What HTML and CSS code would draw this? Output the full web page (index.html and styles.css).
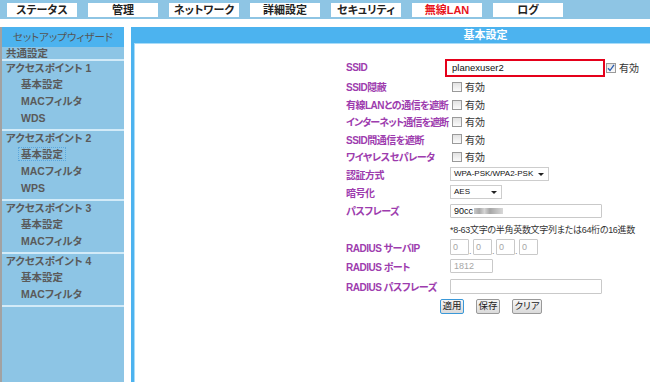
FILE: index.html
```html
<!DOCTYPE html>
<html lang="ja">
<head>
    <meta charset="UTF-8">
    <title>無線LAN 基本設定</title>
    <link rel="stylesheet" href="styles.css">
</head>
<body>
    <!-- Onglets du haut -->
    <div class="topbar">
        <div class="tab">ステータス</div>
        <div class="tab">管理</div>
        <div class="tab">ネットワーク</div>
        <div class="tab">詳細設定</div>
        <div class="tab">セキュリティ</div>
        <div class="tab tab-active">無線LAN</div>
        <div class="tab">ログ</div>
    </div>

    <div class="layout">
        <!-- Menu latéral -->
        <div class="sidebar">
            <div class="side-head">セットアップウィザード</div>
            <div class="side-top">共通設定</div>
            <div class="group">
                <div class="group-title">アクセスポイント 1</div>
                <div class="item">基本設定</div>
                <div class="item">MACフィルタ</div>
                <div class="item">WDS</div>
            </div>
            <div class="group">
                <div class="group-title">アクセスポイント 2</div>
                <div class="item"><span class="focused">基本設定</span></div>
                <div class="item">MACフィルタ</div>
                <div class="item">WPS</div>
            </div>
            <div class="group">
                <div class="group-title">アクセスポイント 3</div>
                <div class="item">基本設定</div>
                <div class="item">MACフィルタ</div>
            </div>
            <div class="group">
                <div class="group-title">アクセスポイント 4</div>
                <div class="item">基本設定</div>
                <div class="item">MACフィルタ</div>
            </div>
        </div>

        <!-- Panneau principal -->
        <div class="main">
            <div class="main-head">基本設定</div>
            <div class="main-body">
                <div class="form">
                    <div class="row h19">
                        <span class="label">SSID</span>
                        <div class="field">
                            <div class="ssid-box">planexuser2</div>
                            <span class="check checked">
                                <svg width="8" height="8" viewBox="0 0 8 8"><path d="M1 4.2 L3 6.5 L7 0.8" fill="none" stroke="#2a5db0" stroke-width="1.3"/></svg>
                            </span>
                            <span class="check-text">有効</span>
                        </div>
                    </div>
                    <div class="row h19">
                        <span class="label">SSID隠蔽</span>
                        <div class="field"><span class="check"></span><span class="check-text">有効</span></div>
                    </div>
                    <div class="row">
                        <span class="label">有線LANとの通信を遮断</span>
                        <div class="field"><span class="check"></span><span class="check-text">有効</span></div>
                    </div>
                    <div class="row">
                        <span class="label tight">インターネット通信を遮断</span>
                        <div class="field"><span class="check"></span><span class="check-text">有効</span></div>
                    </div>
                    <div class="row h18">
                        <span class="label">SSID間通信を遮断</span>
                        <div class="field"><span class="check"></span><span class="check-text">有効</span></div>
                    </div>
                    <div class="row">
                        <span class="label">ワイヤレスセパレータ</span>
                        <div class="field"><span class="check"></span><span class="check-text">有効</span></div>
                    </div>
                    <div class="row h18">
                        <span class="label">認証方式</span>
                        <div class="field">
                            <div class="select select-auth">WPA-PSK/WPA2-PSK<span class="arrow"></span></div>
                        </div>
                    </div>
                    <div class="row h18">
                        <span class="label">暗号化</span>
                        <div class="field">
                            <div class="select select-enc">AES<span class="arrow"></span></div>
                        </div>
                    </div>
                    <div class="row h19">
                        <span class="label">パスフレーズ</span>
                        <div class="field">
                            <div class="input input-long">90cc<span class="blur"></span></div>
                        </div>
                    </div>
                    <div class="row h18">
                        <span class="label"></span>
                        <div class="field note">*8-63文字の半角英数文字列または64桁の16進数</div>
                    </div>
                    <div class="row h18">
                        <span class="label">RADIUS サーバIP</span>
                        <div class="field">
                            <div class="input ip">0</div><span class="dot">.</span>
                            <div class="input ip">0</div><span class="dot">.</span>
                            <div class="input ip">0</div><span class="dot">.</span>
                            <div class="input ip">0</div>
                        </div>
                    </div>
                    <div class="row h20">
                        <span class="label">RADIUS ポート</span>
                        <div class="field">
                            <div class="input port">1812</div>
                        </div>
                    </div>
                    <div class="row h20">
                        <span class="label">RADIUS パスフレーズ</span>
                        <div class="field">
                            <div class="input input-long input-radius"></div>
                        </div>
                    </div>
                    <div class="buttons">
                        <button class="btn btn-focus">適用</button>
                        <button class="btn">保存</button>
                        <button class="btn btn-wide">クリア</button>
                    </div>
                </div>
            </div>
        </div>
    </div>
</body>
</html>
```

FILE: styles.css
```css
/* Page de configuration du routeur - onglet Wi-Fi */
* { box-sizing: border-box; margin: 0; padding: 0; }
body {
    font-family: 'Liberation Sans', 'Noto Sans CJK JP', sans-serif;
    font-feature-settings: "palt" 1;
    background-color: #fff;
    color: #333;
    width: 650px;
    height: 382px;
    overflow: hidden;
}

.topbar { height: 19px; background-color: #8ec5e4; display: flex; gap: 11px; padding: 3px 0 0 7px; }
.tab { width: 70px; height: 14px; background-color: #fff; text-align: center; font-size: 11px; font-weight: bold; line-height: 14px; color: #222; flex-shrink: 0; }
.tab-active { color: #e8141b; }

.layout { display: flex; margin-top: 8px; height: 355px; }

.sidebar { width: 124px; flex-shrink: 0; background-color: #8dc5e5; border-left: 2px solid #a2a2a2; font-size: 10.5px; font-weight: bold; color: #5a5a5a; }
.side-head { height: 20px; line-height: 20px; background-color: #4cb3ef; text-align: center; font-weight: normal; color: #555; font-size: 10.5px; }
.side-top { height: 14px; line-height: 13px; padding-left: 4px; border-bottom: 2px solid #d3ebf8; }
.group { padding-bottom: 2px; border-bottom: 2px solid #d3ebf8; }
.group-title { height: 15px; line-height: 14px; padding-left: 4px; }
.item { height: 17px; line-height: 17px; padding-left: 19px; }
.focused { outline: 1px dotted #5aa6dc; padding: 0 2px; margin-left: -2px; }

.main { width: 708px; flex-shrink: 0; margin-left: 7px; border-left: 3px solid #4cb3ef; }
.main-head { width: 703px; height: 17px; line-height: 16px; background-color: #4cb3ef; border-bottom: 1px solid #a9dcf8; color: #fff; font-size: 11px; font-weight: bold; text-align: center; }
.main-body { height: 338px; border-left: 1px solid #a9dcf8; background-color: #fff; }

.form { width: 289px; margin-left: 211px; padding-top: 14px; }
.row { display: flex; align-items: center; height: 17px; }
.h18 { height: 18px; }
.h19 { height: 19px; }
.h20 { height: 20px; }
.label { width: 104px; flex-shrink: 0; font-size: 10px; letter-spacing: -0.5px; font-weight: bold; color: #9d3cae; white-space: nowrap; overflow: hidden; }
.tight { letter-spacing: -0.9px; }
.field { display: flex; align-items: center; white-space: nowrap; }

.ssid-box { width: 160px; height: 18px; margin-left: -5px; border: 2px solid #e5001a; padding-left: 5px; font-size: 9.5px; line-height: 14px; color: #111; }
.check { width: 10px; height: 10px; margin-left: 2px; border: 1px solid #9a9a9a; background: linear-gradient(#e2e2e2, #fbfbfb); display: flex; align-items: center; justify-content: center; }
.checked { margin-left: 1px; }
.check-text { font-size: 10px; margin-left: 3px; color: #333; }

.select { height: 14px; border: 1px solid #cdcdcd; background-color: #fff; font-size: 8px; line-height: 12px; padding-left: 3px; display: flex; justify-content: space-between; align-items: center; color: #111; }
.select-auth { width: 99px; }
.select-enc { width: 52px; }
.arrow { width: 0; height: 0; border-left: 3px solid transparent; border-right: 3px solid transparent; border-top: 3px solid #222; margin-right: 4px; }

.input { height: 14px; border: 1px solid #c9c9c9; border-radius: 1px; background-color: #fff; font-size: 9px; line-height: 12px; padding-left: 3px; color: #111; display: flex; align-items: center; }
.input-long { width: 152px; }
.input-radius { height: 15px; }
.blur { display: inline-block; width: 29px; height: 6px; margin-left: 1px; background: linear-gradient(90deg, #c8c8c8, #a9a9a9 18%, #d6d6d6 36%, #a6a6a6 55%, #bdbdbd 75%, #d8d8d8); filter: blur(0.4px); }
.note { font-size: 9px; letter-spacing: -0.3px; color: #333; }
.ip { width: 19px; height: 16px; color: #a6a6a6; padding-left: 2px; }
.dot { width: 4px; font-size: 9px; color: #888; align-self: flex-end; line-height: 8px; }
.port { width: 43px; color: #a6a6a6; }

.buttons { display: flex; justify-content: center; gap: 12px; height: 20px; align-items: center; padding-left: 1px; }
.btn { width: 24px; height: 15px; border: 1px solid #999; border-radius: 2px; background: linear-gradient(#f6f6f6, #dadada); font-family: 'Liberation Sans', 'Noto Sans CJK JP', sans-serif; font-feature-settings: "palt" 1; font-size: 9.5px; line-height: 12px; color: #222; }
.btn-focus { border-color: #3a98d8; }
.btn-wide { width: 30px; }
```
